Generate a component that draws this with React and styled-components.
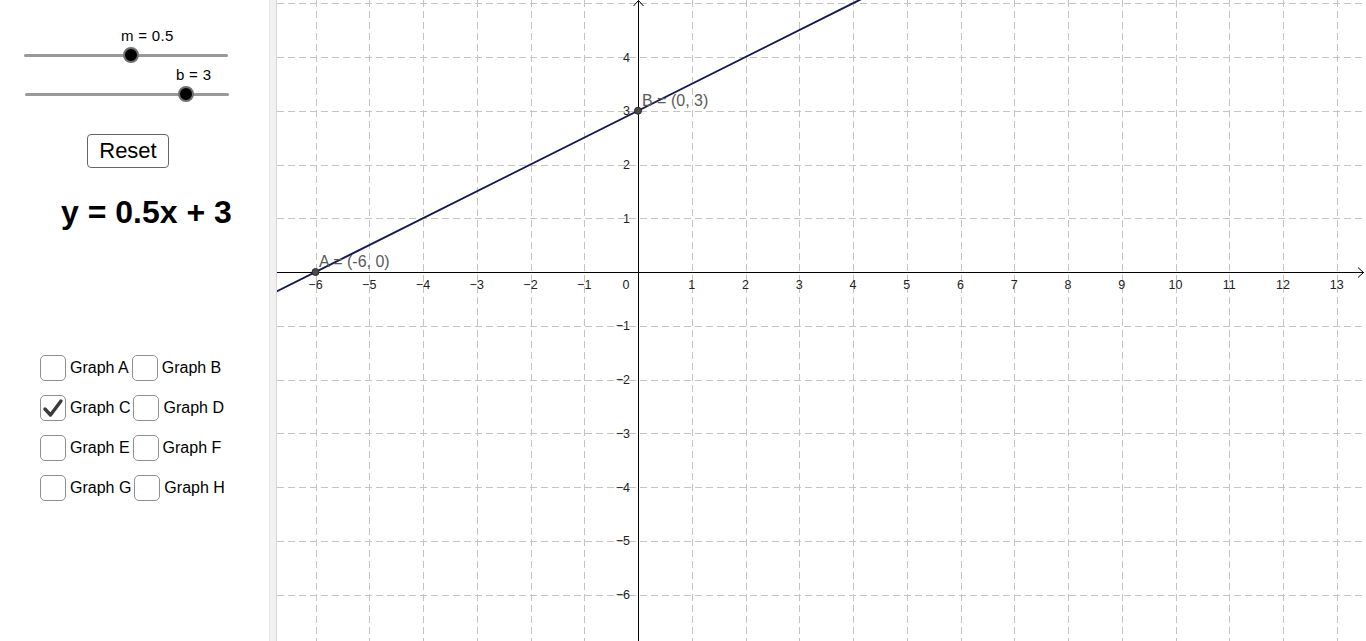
import React from 'react'
import styled, { createGlobalStyle } from 'styled-components'

const GlobalStyle = createGlobalStyle`
html, body {
  margin:0;
  padding:0;
  background:#fff;
  font-family:"Liberation Sans", Arial, sans-serif;
  overflow:hidden;
}
*{ box-sizing:border-box; }
`

const Page = styled.div`
display:flex;
width:1366px;
height:641px;
overflow:hidden;
`
const Panel = styled.div`
width:269px;
flex:none;
display:flex;
flex-direction:column;
padding-top:28px;
background:#fff;
`
const Divider = styled.div`
width:8px;
flex:none;
background:#f1f1f1;
border-left:1px solid #e6e6e6;
border-right:1px solid #d6d6d6;
`
const GraphArea = styled.div`
flex:1;
height:641px;
`

const SliderBox = styled.div`
position:relative;
width:204px;
height:36px;
margin-left:${p => p.$left}px;
margin-bottom:3px;
`
const SliderLabel = styled.div`
position:absolute;
top:0;
font-size:15px;
letter-spacing:0.3px;
line-height:16px;
color:#000;
white-space:nowrap;
`
const Track = styled.div`
position:absolute;
left:0;
right:0;
top:26px;
height:3px;
border-radius:2px;
background:#999;
`
const Knob = styled.div`
position:absolute;
top:19px;
width:16px;
height:16px;
border-radius:50%;
background:#000;
border:2px solid #707070;
`

const ResetButton = styled.button`
margin:28px 0 0 87px;
width:82px;
height:34px;
padding:0;
font-family:"Liberation Sans", Arial, sans-serif;
font-size:22px;
color:#000;
background:#fff;
border:1px solid #666;
border-radius:4px;
`

const Equation = styled.div`
margin:26px 0 0 61px;
font-size:32px;
line-height:36px;
font-weight:bold;
color:#000;
white-space:nowrap;
`

const Checks = styled.div`
margin:125px 0 0 40px;
display:flex;
flex-direction:column;
gap:14px;
`
const CheckRow = styled.div`
display:flex;
align-items:center;
gap:3px;
`
const CheckItem = styled.label`
display:flex;
align-items:center;
gap:4px;
font-size:16px;
color:#000;
white-space:nowrap;
`
const Box = styled.span`
width:26px;
height:26px;
border:1.5px solid #8f8f8f;
border-radius:5px;
display:flex;
align-items:center;
justify-content:center;
background:#fff;
`

const Slider = ({ label, left, knob }) => (
  <SliderBox $left={left}>
    <SliderLabel style={{ left: knob - 10 }}>{label}</SliderLabel>
    <Track />
    <Knob style={{ left: knob - 8 }} />
  </SliderBox>
)

const Check = ({ label, checked }) => (
  <CheckItem>
    <Box>
      {checked && (
        <svg width="22" height="22" viewBox="0 0 22 22">
          <path d="M3 12 L8.5 18 L19 4" fill="none" stroke="#3a3a3a" strokeWidth="3.4" strokeLinecap="round" strokeLinejoin="round" />
        </svg>
      )}
    </Box>
    {label}
  </CheckItem>
)

const OX = 638
const OY = 272
const U = 53.75
const px = k => OX + k * U
const py = k => OY - k * U

const Graph = () => {
  const xs = []
  for (let k = -6; k <= 13; k++) xs.push(k)
  const ys = []
  for (let k = -6; k <= 5; k++) ys.push(k)
  const fmt = k => (k < 0 ? '\u2212' + Math.abs(k) : String(k))
  return (
    <svg width="1089" height="641" viewBox="277 0 1089 641" style={{ display: 'block' }}>
      <g stroke="#c4c4c4" strokeWidth="1" strokeDasharray="7 4">
        {xs.map(k => (
          <line key={'gx' + k} x1={Math.round(px(k)) + 0.5} y1="0" x2={Math.round(px(k)) + 0.5} y2="641" />
        ))}
        {ys.map(k => (
          <line key={'gy' + k} x1="277" y1={Math.round(py(k)) + 0.5} x2="1366" y2={Math.round(py(k)) + 0.5} />
        ))}
      </g>
      <g stroke="#000" strokeWidth="1" fill="none">
        <line x1="277" y1={OY + 0.5} x2="1364" y2={OY + 0.5} />
        <line x1={OX + 0.5} y1="1" x2={OX + 0.5} y2="641" />
        <path d={`M1358 ${OY - 4.5} L1363.5 ${OY + 0.5} L1358 ${OY + 5.5}`} />
        <path d={`M${OX - 4.5} 6 L${OX + 0.5} 0.5 L${OX + 5.5} 6`} />
      </g>
      <g fontFamily='"Liberation Sans", Arial, sans-serif' fontSize="12.5" fill="#222">
        {xs.filter(k => k !== 0).map(k => (
          <text key={'lx' + k} x={px(k)} y="289" textAnchor="middle">{fmt(k)}</text>
        ))}
        <text x="626" y="289" textAnchor="middle">0</text>
        {ys.filter(k => k !== 0 && k !== 5).map(k => (
          <text key={'ly' + k} x="630" y={py(k) + 4.5} textAnchor="end">{fmt(k)}</text>
        ))}
      </g>
      <line x1={px(-7)} y1={py(-0.5)} x2={px(5)} y2={py(5.5)} stroke="#161a4d" strokeWidth="2" />
      <g fill="#4a4a4a" stroke="#2a2a2a" strokeWidth="1">
        <circle cx={px(-6)} cy={py(0)} r="3.5" />
        <circle cx={px(0)} cy={py(3)} r="3.5" />
      </g>
      <g fontFamily='"Liberation Sans", Arial, sans-serif' fontSize="16" fill="#5a5a5a">
        <text x="319" y="267">A = (-6, 0)</text>
        <text x="642" y="106">B = (0, 3)</text>
      </g>
    </svg>
  )
}

const App = () => {
  return (
    <Page>
      <GlobalStyle />
      <Panel>
        <Slider label="m = 0.5" left={24} knob={107} />
        <Slider label="b = 3" left={25} knob={161} />
        <ResetButton>Reset</ResetButton>
        <Equation>y = 0.5x + 3</Equation>
        <Checks>
          <CheckRow>
            <Check label="Graph A" />
            <Check label="Graph B" />
          </CheckRow>
          <CheckRow>
            <Check label="Graph C" checked />
            <Check label="Graph D" />
          </CheckRow>
          <CheckRow>
            <Check label="Graph E" />
            <Check label="Graph F" />
          </CheckRow>
          <CheckRow>
            <Check label="Graph G" />
            <Check label="Graph H" />
          </CheckRow>
        </Checks>
      </Panel>
      <Divider />
      <GraphArea>
        <Graph />
      </GraphArea>
    </Page>
  )
}

export default App
